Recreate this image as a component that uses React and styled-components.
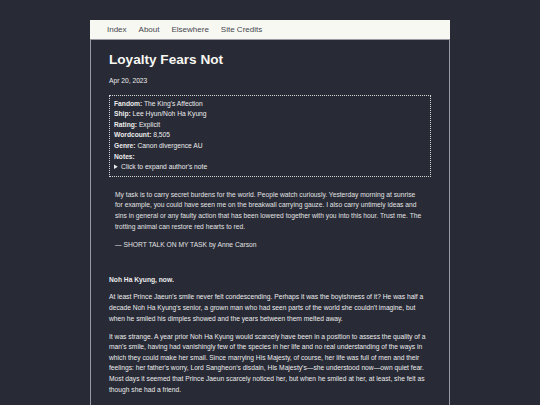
import styled, { createGlobalStyle } from "styled-components";

const GlobalStyle = createGlobalStyle`
  html, body {
    margin: 0;
    padding: 0;
    background: #282a36;
  }
  body {
    font-family: "Liberation Sans", Arial, sans-serif;
    color: #ececec;
  }
`;

const Page = styled.div`
  width: 360px;
  margin: 20px auto 0;
  border: 1px solid #9a9aa2;
  border-top: none;
  box-sizing: border-box;
  min-height: 400px;
`;

const Nav = styled.nav`
  height: 19px;
  background: #f8f8f2;
  border-bottom: 1px solid #9a9aa2;
  display: flex;
  align-items: center;
  gap: 12px;
  padding: 0 17px;
  margin: 0 -1px;
`;

const NavLink = styled.a`
  font-size: 8px;
  color: #44464f;
  text-decoration: none;
`;

const Main = styled.main`
  padding: 0 18px 20px;
  font-size: 6.7px;
  line-height: 10.6px;
`;

const Title = styled.h1`
  font-size: 13.6px;
  line-height: 16px;
  font-weight: bold;
  margin: 12px 0 0;
  color: #f8f8f2;
`;

const DateLine = styled.p`
  margin: 8px 0 0;
`;

const InfoBox = styled.div`
  margin-top: 8px;
  border: 1px dotted #d8d8d8;
  padding: 3px 4px;
`;

const InfoRow = styled.div`
  b {
    font-weight: bold;
  }
`;

const Summary = styled.summary`
  cursor: pointer;
`;

const Quote = styled.blockquote`
  margin: 13px 8px 0 6px;
  color: #e2e2e2;

  p {
    margin: 0 0 7.5px;
  }
`;

const SectionHead = styled.p`
  font-weight: bold;
  margin: 25px 0 6.5px;
`;

const Para = styled.p`
  margin: 0 0 7.5px;
`;

const meta = [
  ["Fandom:", "The King's Affection"],
  ["Ship:", "Lee Hyun/Noh Ha Kyung"],
  ["Rating:", "Explicit"],
  ["Wordcount:", "8,505"],
  ["Genre:", "Canon divergence AU"],
];

export default function App() {
  return (
    <>
      <GlobalStyle />
      <Page>
        <Nav>
          <NavLink href="#">Index</NavLink>
          <NavLink href="#">About</NavLink>
          <NavLink href="#">Elsewhere</NavLink>
          <NavLink href="#">Site Credits</NavLink>
        </Nav>
        <Main>
          <Title>Loyalty Fears Not</Title>
          <DateLine>Apr 20, 2023</DateLine>
          <InfoBox>
            {meta.map(([label, value]) => (
              <InfoRow key={label}>
                <b>{label}</b> {value}
              </InfoRow>
            ))}
            <InfoRow>
              <b>Notes:</b>
            </InfoRow>
            <details>
              <Summary>Click to expand author's note</Summary>
            </details>
          </InfoBox>
          <Quote>
            <p>
              My task is to carry secret burdens for the world. People watch curiously. Yesterday morning at sunrise
              for example, you could have seen me on the breakwall carrying gauze. I also carry untimely ideas and
              sins in general or any faulty action that has been lowered together with you into this hour. Trust me. The
              trotting animal can restore red hearts to red.
            </p>
            <p>— SHORT TALK ON MY TASK by Anne Carson</p>
          </Quote>
          <SectionHead>Noh Ha Kyung, now.</SectionHead>
          <Para>
            At least Prince Jaeun's smile never felt condescending. Perhaps it was the boyishness of it? He was half a
            decade Noh Ha Kyung's senior, a grown man who had seen parts of the world she couldn't imagine, but
            when he smiled his dimples showed and the years between them melted away.
          </Para>
          <Para>
            It was strange. A year prior Noh Ha Kyung would scarcely have been in a position to assess the quality of a
            man's smile, having had vanishingly few of the species in her life and no real understanding of the ways in
            which they could make her small. Since marrying His Majesty, of course, her life was full of men and their
            feelings: her father's worry, Lord Sangheon's disdain, His Majesty's—she understood now—own quiet fear.
            Most days it seemed that Prince Jaeun scarcely noticed her, but when he smiled at her, at least, she felt as
            though she had a friend.
          </Para>
        </Main>
      </Page>
    </>
  );
}
